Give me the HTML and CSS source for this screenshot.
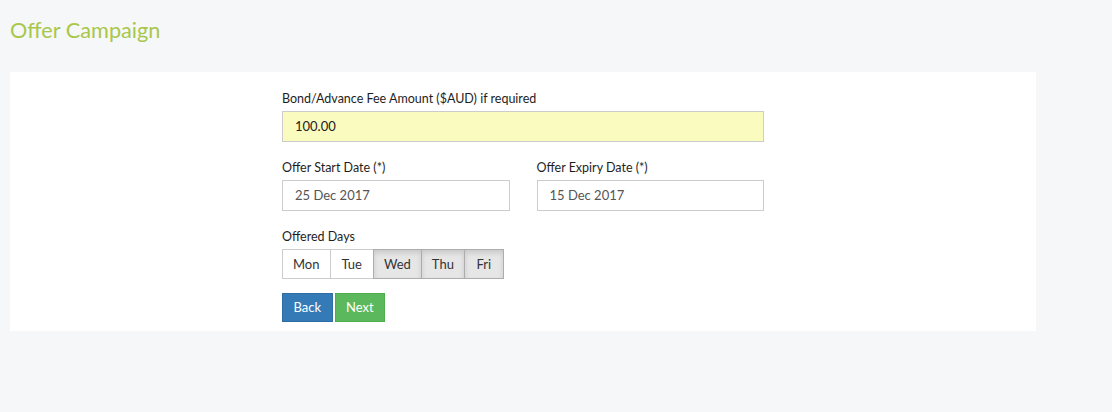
FILE: index.html
```html
<!DOCTYPE html>
<html>
<head>
<meta charset="utf-8">
<link rel="stylesheet" href="styles.css">
</head>
<body>
<h1 class="page-title">Offer Campaign</h1>
<div class="panel">
  <form class="form">
    <div class="group">
      <label class="label">Bond/Advance Fee Amount ($AUD) if required</label>
      <div class="input input-yellow">100.00</div>
    </div>
    <div class="row">
      <div class="group">
        <label class="label">Offer Start Date (*)</label>
        <div class="input">25 Dec 2017</div>
      </div>
      <div class="group">
        <label class="label">Offer Expiry Date (*)</label>
        <div class="input">15 Dec 2017</div>
      </div>
    </div>
    <div class="group">
      <label class="label">Offered Days</label>
      <div class="days">
        <span class="day">Mon</span><span class="day day-tue">Tue</span><span class="day active">Wed</span><span class="day active">Thu</span><span class="day active day-fri">Fri</span>
      </div>
    </div>
    <div class="actions">
      <span class="btn btn-back">Back</span>
      <span class="btn btn-next">Next</span>
    </div>
  </form>
</div>
</body>
</html>
```
FILE: styles.css
```css
html, body {
  margin: 0;
  padding: 0;
  background: #f5f7f9;
  font-family: Lato, "Open Sans", sans-serif;
  height: 100%;
}
.page-title {
  margin: 0;
  padding: 17px 0 0 10px;
  height: 55px;
  box-sizing: border-box;
  font-size: 21.7px;
  line-height: 26px;
  font-weight: 400;
  color: #a9c74b;
}
.panel {
  margin-left: 10px;
  width: 1026px;
  margin-top: 17px;
  background: #fff;
  padding: 17px 0 9px 272px;
  box-sizing: border-box;
}
.form {
  width: 482px;
}
.group {
  margin-bottom: 16px;
}
.label {
  display: block;
  font-size: 12.5px;
  line-height: 19px;
  font-weight: 400;
  color: #1e1e1e;
  margin-bottom: 3px;
}
.input {
  height: 31px;
  box-sizing: border-box;
  border: 1px solid #ccc;
  padding: 0 12px;
  font-size: 13px;
  line-height: 29px;
  color: #555;
  background: #fff;
}
.input-yellow {
  background: #fafbbf;
  color: #222;
}
.row {
  display: flex;
  gap: 27px;
}
.row .group {
  flex: 1;
}
.days {
  display: flex;
}
.day {
  height: 30px;
  box-sizing: border-box;
  padding: 0 10px;
  font-size: 13px;
  line-height: 28px;
  color: #333;
  border: 1px solid #ccc;
  background: #fff;
  margin-left: -1px;
}
.day:first-child {
  margin-left: 0;
}
.day-tue {
  padding: 0 11px;
}
.day-fri {
  padding: 0 11.5px;
}
.day.active {
  background: #e6e6e6;
  border-color: #adadad;
  box-shadow: inset 0 3px 5px rgba(0, 0, 0, 0.125);
  position: relative;
}
.actions {
  display: flex;
  gap: 2px;
  margin-top: -2px;
}
.btn {
  height: 29px;
  box-sizing: border-box;
  padding: 0 10.5px;
  font-size: 13px;
  line-height: 27px;
  color: #fff;
  border: 1px solid transparent;
}
.btn-back {
  background: #337ab7;
  border-color: #2e6da4;
}
.btn-next {
  background: #5cb85c;
  border-color: #4cae4c;
}
```
